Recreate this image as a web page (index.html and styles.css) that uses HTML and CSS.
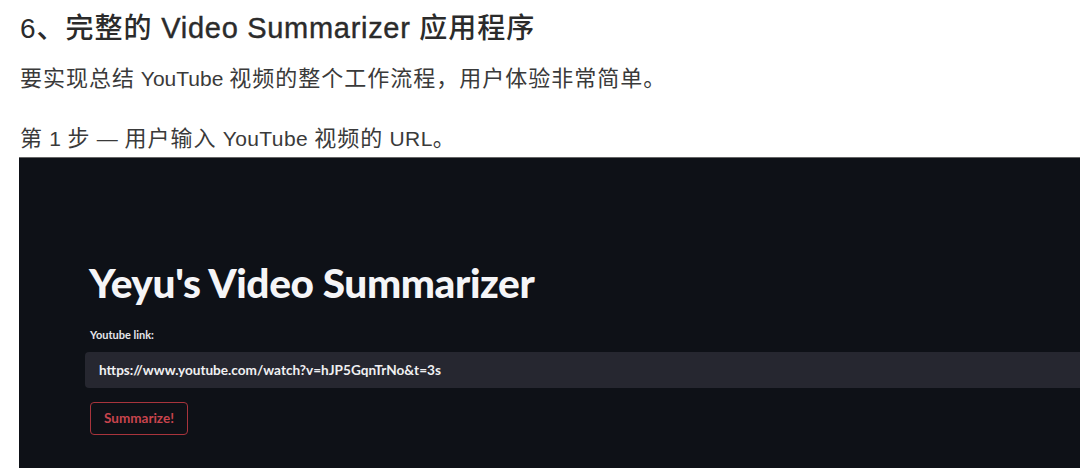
FILE: index.html
```html
<!DOCTYPE html>
<html lang="zh-CN">
<head>
<meta charset="utf-8">
<link rel="stylesheet" href="styles.css">
</head>
<body>
<div class="article">
  <h2 class="heading">6、完整的<span class="en"> Video Summarizer </span>应用程序</h2>
  <p class="para">要实现总结<span class="en"> YouTube </span>视频的整个工作流程，用户体验非常简单。</p>
  <p class="para step">第<span class="en"> 1 </span>步<span class="en"> — </span>用户输入<span class="en"> YouTube </span>视频的<span class="en"> URL</span>。</p>
  <div class="shot">
    <div class="app">
      <h1 class="app-title">Yeyu's Video Summarizer</h1>
      <div class="label">Youtube link:</div>
      <div class="input">https://www.youtube.com/watch?v=hJP5GqnTrNo&amp;t=3s</div>
      <div class="btn">Summarize!</div>
    </div>
  </div>
</div>
</body>
</html>
```

FILE: styles.css
```css
html, body {
  margin: 0;
  padding: 0;
  background: #ffffff;
  overflow: hidden;
}
body {
  width: 1080px;
  height: 468px;
  font-family: "Liberation Sans", "Noto Sans CJK SC", sans-serif;
  color: #333333;
}
.article {
  padding-left: 19px;
}
.heading {
  margin: 0;
  padding: 11px 0 0 1px;
  font-size: 28px;
  line-height: 34px;
  font-weight: 500;
  color: #2b2b2b;
  letter-spacing: 1px;
}
.heading .en {
  font-size: 29px;
  letter-spacing: 0.7px;
  -webkit-text-stroke: 0.4px #2b2b2b;
}
.para {
  margin: 0;
  padding-left: 1px;
  font-size: 22px;
  line-height: 28px;
  color: #3a3a3a;
  letter-spacing: 1px;
}
.para .en {
  font-size: 21px;
  letter-spacing: 0;
}
.step .en {
  letter-spacing: 0.4px;
}
.heading + .para {
  margin-top: 19px;
}
.step {
  margin-top: 32px;
}
.shot {
  margin-top: 4px;
  height: 320px;
  background: #0e1117;
  border-top: 1px solid #666;
}
.app {
  padding: 100px 0 0 70px;
  font-family: "Lato", "Noto Sans", sans-serif;
}
.app-title {
  margin: 0;
  font-size: 40.6px;
  line-height: 50px;
  font-weight: 900;
  color: #f5f5f7;
  letter-spacing: -0.4px;
}
.label {
  margin-top: 20px;
  font-size: 11px;
  line-height: 14px;
  color: #e6e6ea;
  padding-left: 1px;
  font-weight: 700;
}
.input {
  margin-top: 10px;
  margin-left: -4px;
  height: 36px;
  line-height: 36px;
  background: #262730;
  border-radius: 4px 0 0 4px;
  padding-left: 14px;
  font-size: 13.6px;
  font-weight: 700;
  color: #f0f0f2;
}
.btn {
  margin-top: 14px;
  margin-left: 1px;
  width: 98px;
  height: 33px;
  box-sizing: border-box;
  border: 1px solid #a8343c;
  border-radius: 4px;
  text-align: center;
  line-height: 31px;
  font-size: 13.5px;
  font-weight: 700;
  color: #c8444d;
}
```
